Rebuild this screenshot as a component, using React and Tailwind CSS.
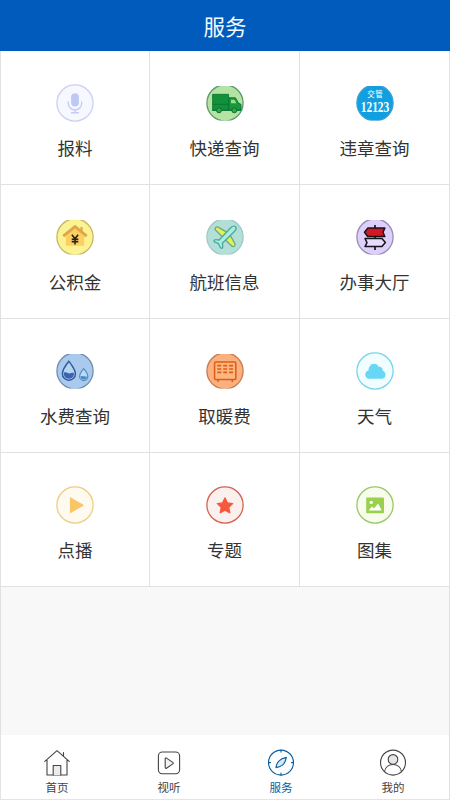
import React from 'react';

const BadgeIcon = ({ id, clipped, fill, stroke, children, caption }) => (
  <svg viewBox="0 0 38 38" className="block size-[38px] overflow-visible" fill="none">
    <defs>
      <clipPath id={id}>
        <rect x="0" y={clipped ? 1.9 : 0} width="38" height={clipped ? 34.6 : 38} />
      </clipPath>
    </defs>
    <g clipPath={`url(#${id})`}>
      <circle cx="19" cy="19" r="18.1" fill={fill} stroke={stroke} strokeWidth="1.3" />
      {children}
    </g>
    {caption}
  </svg>
);

const Microphone = () => (
  <BadgeIcon id="mic" fill="#f7f8ff" stroke="#ccd0ef">
    <rect x="15.1" y="9.3" width="7.8" height="13.2" rx="3.9" fill="#bec8f5" />
    <path d="M12.3 17.5v1.7a6.7 6.7 0 0 0 13.4 0v-1.7M19 26v2.6M15 28.7h8" stroke="#c3ccf4" strokeWidth="1.4" />
  </BadgeIcon>
);

const Truck = () => (
  <BadgeIcon id="truck" clipped fill="#b5e3a4" stroke="#5c9a6c">
    <path d="M6.6 10.3h16v16h-16z" fill="#12913a" stroke="#087331" strokeWidth=".8" />
    <path d="M22.8 13.8h6.6l3 5.2 2.6 1.4v5.9H22.8z" fill="#16983b" stroke="#087331" strokeWidth=".9" />
    <path d="M25 15.8h3.5l1.9 3.4H25z" fill="#9bdc86" />
    <path d="M6.6 20.3h16M6 26.3h29" stroke="#087331" strokeWidth=".9" />
    <circle cx="13" cy="26.3" r="2.5" fill="#36a34c" stroke="#087331" />
    <circle cx="28.3" cy="26.3" r="2.5" fill="#36a34c" stroke="#087331" />
  </BadgeIcon>
);

const TrafficCaption = () => (
  <>
    <text x="11.2" y="13.2" textLength="15.6" fill="#fff" className="font-['Noto_Sans_CJK_SC',sans-serif] text-[7.5px]">交管</text>
    <text transform="translate(4.7 27.5) scale(.83 1.08)" fill="#fff" className="font-['Liberation_Serif',serif] text-[13.8px] font-bold">12123</text>
  </>
);

const Traffic = () => (
  <BadgeIcon id="traffic" clipped fill="#109fe0" stroke="#3c9fce" caption={<TrafficCaption />} />
);

const Fund = () => (
  <BadgeIcon id="fund" clipped fill="#fbf292" stroke="#c9b765">
    <path d="M9.8 18l9.2-9 9.2 9v9.8H9.800z" fill="#fbcf62" />
    <path d="M7.3 18.2L19 8.5l11.7 9.7" stroke="#dfa548" strokeWidth="2.9" strokeLinejoin="round" />
    <path d="M25.5 9v4.5" stroke="#dfa548" strokeWidth="2.2" />
    <path d="M15.9 16.7l3.1 4 3.1-4M19 20.7v5.8M15.7 21.4h6.6M15.7 23.8h6.6" stroke="#28241b" strokeWidth="1.6" />
  </BadgeIcon>
);

const Plane = () => (
  <BadgeIcon id="plane" clipped fill="#b4dfd8" stroke="#9fc9c5">
    <g strokeLinejoin="round" strokeWidth="1.4">
      <path d="M9.2 11.800c-.7-1.500 1.300-3.500 2.900-2.700l9 5.300-4.500 4.600z" fill="#e8ee56" stroke="#68ae84" />
      <path d="M24.200 17.300l4.700 8.200c.9 1.600-1 3.700-2.600 2.900L19.500 22z" fill="#e8ee56" stroke="#68ae84" />
      <path d="M8.500 22.100c.9-.9 2.700-.4 4.600 0L24.800 9.800c1.500-1.500 3.700-2 4.700-1 1 1 .4 3.100-1.100 4.600L16.300 25.200c.5 2 .9 3.800 0 4.700-.8.7-1.700.2-2.100-.7l-1.700-3.500-3.500-1.600c-.9-.4-1.200-1.300-.5-2z" fill="#a9eedb" stroke="#4eaaa3" />
    </g>
  </BadgeIcon>
);

const Hall = () => (
  <BadgeIcon id="hall" clipped fill="#ddd0fa" stroke="#9a8bb4">
    <path d="M19 7v25" stroke="#17131b" strokeWidth="1.7" />
    <path d="M8.500 14.300l3.200-4.200h17.100l-1.800 4.200 1.800 4.200H11.700z" fill="#d31825" stroke="#17131b" strokeWidth="1.500" strokeLinejoin="round" />
    <path d="M9 20.600h16.900l3.500 4-3.500 4H9l2-4z" fill="#e6dcfb" stroke="#17131b" strokeWidth="1.500" strokeLinejoin="round" />
  </BadgeIcon>
);

const Water = () => (
  <BadgeIcon id="water" clipped fill="#a9c9ed" stroke="#6f8fb2">
    <path d="M12.900 9.300s-6.500 8-6.500 12.400a6.500 6.500 0 0 0 13 0c0-4.400-6.500-12.400-6.500-12.400z" fill="#b8d4f5" stroke="#2f5c9f" strokeWidth="1.500" />
    <path d="M7.900 20.700c2.300-1.300 3.900 1 5.500.8 1.700-.2 2.700-1.300 4.500-.5.300 3.400-1.600 5.700-5 5.700s-5.400-2.800-5-6z" fill="#3c63ae" />
    <path d="M27.700 16.700s-4.100 4.700-4.100 7.800a4.100 4.100 0 0 0 8.200 0c0-3.100-4.100-7.800-4.100-7.800z" fill="#b8daf4" stroke="#578ec2" strokeWidth="1.200" />
    <path d="M24.600 24.200c1.700-.8 3.600.8 6.200 0 .1 2.200-1.300 3.400-3.100 3.400s-3.300-1.200-3.100-3.400z" fill="#468acb" />
  </BadgeIcon>
);

const Heating = () => (
  <BadgeIcon id="heating" clipped fill="#fbb17f" stroke="#c87b50">
    <rect x="8.600" y="10.100" width="21.200" height="17.300" rx="1" fill="#ffb782" stroke="#dc5d16" strokeWidth="1.500" />
    <path d="M11.300 13.700h4M17.200 13.700h4M23.100 13.700h4M11.300 17h4M17.200 17h4M23.100 17h4M11.300 20.300h4M17.200 20.300h4M23.100 20.300h4" stroke="#dc5d16" strokeWidth="1.700" />
    <path d="M12 28v2M26.300 28v2" stroke="#dc5d16" strokeWidth="1.500" />
  </BadgeIcon>
);

const Weather = () => (
  <BadgeIcon id="weather" fill="#f2fdff" stroke="#76d5ea">
    <path d="M13.200 26.700a4 4 0 0 1-4-4.200c0-2.300 1.500-3.900 3.300-4.100.2-3.800 2.400-6.700 5.500-6.700 2.200 0 3.800 1.100 4.600 3 2.700-.3 4.300 1.500 4.200 4 1.600.6 2.700 2.200 2.700 4 0 2.400-1.700 4-4 4z" fill="#67d7f5" />
  </BadgeIcon>
);

const Demand = () => (
  <BadgeIcon id="demand" fill="#fffaf0" stroke="#ecce83">
    <path d="M14.500 11.900v14.500l12.500-7.200z" fill="#fac565" stroke="#fac565" strokeWidth="1.200" strokeLinejoin="round" />
  </BadgeIcon>
);

const Topic = () => (
  <BadgeIcon id="topic" fill="#faf0ee" stroke="#d5604d">
    <path d="M19 12l2.300 4.900 5.300.7-3.900 3.700 1 5.400-4.700-2.600-4.700 2.600 1-5.400-3.900-3.700 5.300-.7z" fill="#f6593c" stroke="#f6593c" strokeWidth="1.400" strokeLinejoin="round" />
  </BadgeIcon>
);

const Gallery = () => (
  <BadgeIcon id="gallery" fill="#f7fced" stroke="#99c764">
    <rect x="10.200" y="11.600" width="17.800" height="15.600" rx="1" fill="#99d04e" />
    <circle cx="15.200" cy="16.400" r="1.700" fill="#fff" />
    <path d="M12.700 24.500l3.200-3.900 2.100 2 4.100-5.100 3.600 7z" fill="#fff" />
  </BadgeIcon>
);

const services = [
  ['报料', Microphone],
  ['快递查询', Truck],
  ['违章查询', Traffic],
  ['公积金', Fund],
  ['航班信息', Plane],
  ['办事大厅', Hall],
  ['水费查询', Water],
  ['取暖费', Heating],
  ['天气', Weather],
  ['点播', Demand],
  ['专题', Topic],
  ['图集', Gallery],
];

const NavIcon = ({ children }) => (
  <svg viewBox="0 0 28 28" className="block size-7" fill="none" stroke="currentColor" strokeWidth="1.1" strokeLinecap="round" strokeLinejoin="round">
    {children}
  </svg>
);

const tabs = [
  ['首页', <>
    <path d="M1.800 12.400L14 1.700l12.200 10.700M4 11v15h20V11M20.500 7V3.500" />
    <path d="M10.200 26v-9.500h7.600V26" fill="#ececec" />
  </>],
  ['视听', <>
    <rect x="3.400" y="3" width="21.200" height="21.700" rx="4" />
    <path d="M10.200 9.600v8.900c0 .7.700 1 1.300.7l6.300-4.300c.6-.4.600-1.100 0-1.500l-6.300-4.300c-.6-.4-1.300-.1-1.300.5z" fill="#f2f2f2" />
  </>],
  ['服务', <>
    <circle cx="14" cy="13.600" r="12.500" />
    <path d="M14 1.100v2M14 24.100v2M1.500 13.600h2M24.500 13.600h2" />
    <path d="M19.300 8.400c-.5 3.500-1.900 6.300-4.200 8-1.700 1.100-3.700 1.800-6.100 2.200.3-2.400 1-4.600 2.800-6.500 1.700-1.900 4.300-3.100 7.500-3.700z" fill="#d3e9f8" />
  </>],
  ['我的', <>
    <circle cx="14" cy="13.600" r="12.500" />
    <circle cx="14" cy="10.400" r="4.800" fill="#e6e6e6" />
    <path d="M5.500 22.600c.7-4.300 4.200-7.100 8.500-7.100s7.800 2.800 8.500 7.100" />
  </>],
];

export default function App() {
  return (
    <div className="flex h-[800px] w-[450px] flex-col overflow-hidden bg-[#f8f8f8] font-['Noto_Sans_CJK_SC',sans-serif] text-[#333]">
      <header className="flex h-[51px] shrink-0 items-center justify-center bg-[#005bbd] text-[21.5px] leading-none text-[#f4faff]">
        <h1>服务</h1>
      </header>
      <div className="flex grow flex-col border-x border-[#e0e0e0]">
        <main className="-mx-px grid grid-cols-3 bg-white">
          {services.map(([label, Icon]) => (
            <button key={label} className="flex h-[134px] flex-col items-center border-r border-b border-[#e1e1e1] pt-[33px] nth-[3n+1]:border-l">
              <Icon />
              <span className="mt-[14px] text-[17.5px] leading-6">{label}</span>
            </button>
          ))}
        </main>
        <nav className="-ml-px mt-auto grid h-[65px] grid-cols-4 border-b border-l border-[#e4e4e4] bg-white">
          {tabs.map(([label, icon]) => (
            <button key={label} className={`flex flex-col items-center pt-3.5 ${label === '服务' ? 'text-[#075b9f]' : 'text-[#444]'}`}>
              <NavIcon>{icon}</NavIcon>
              <span className="mt-0.5 text-[11.5px] leading-4">{label}</span>
            </button>
          ))}
        </nav>
      </div>
    </div>
  );
}
